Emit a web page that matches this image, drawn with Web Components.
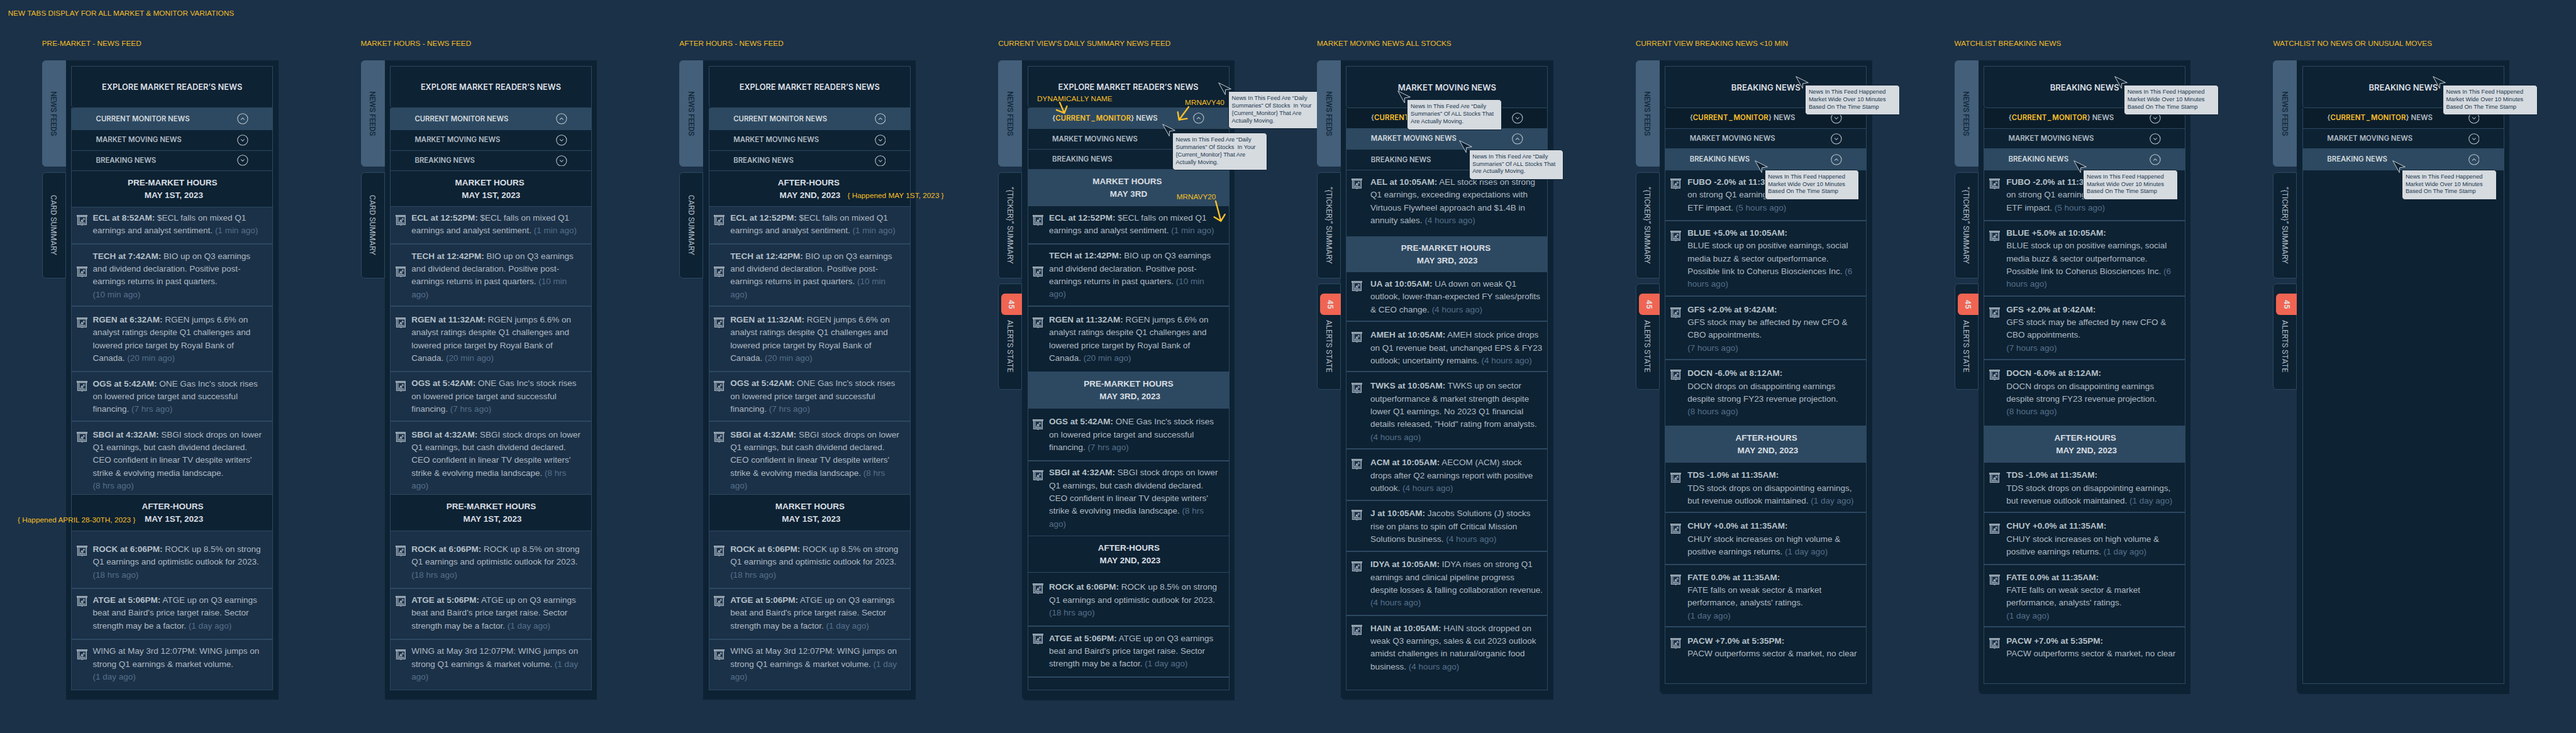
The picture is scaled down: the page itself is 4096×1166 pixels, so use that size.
<!DOCTYPE html>
<html lang="en">
<head>
<meta charset="utf-8">
<title>News feed tabs</title>
<style>
html,body{margin:0;padding:0;background:#1b3148;}
body{width:4096px;height:1166px;overflow:hidden;font-family:"Liberation Sans",Arial,sans-serif;}
</style>
</head>
<body>
<news-board></news-board>
<script>
const BORDER = '#2c4961';

class FeedIcon extends HTMLElement {
  constructor() {
    super();
    this.attachShadow({mode: 'open'}).innerHTML = `
      <style>:host{display:block;width:20px;height:20px}svg{display:block}</style>
      <svg width="20" height="20" viewBox="0 0 20 20" fill="none">
        <rect x="1.6" y="2.6" width="16.8" height="15.6" fill="#5d7183" stroke="#a9b6c1" stroke-width="1.2"/>
        <rect x="4.4" y="4.2" width="11.8" height="11" fill="#1b3047"/>
        <path d="M4.9 4.6V14.8H15.8" stroke="#a9b6c1" stroke-width="1.1"/>
        <path d="M6.6 13.2H8L9 9.6 10.2 8.9V13H11.6L12.6 6.6 14 6.3 14.4 8.6H15.6" stroke="#c3cdd5" stroke-width="1.1"/>
        <rect x=".6" y=".5" width="18.8" height="2" fill="#5d7183" stroke="#b9c4cd" stroke-width="1.1"/>
        <path d="M9 19.2H11.2" stroke="#a9b6c1" stroke-width="1.4"/>
      </svg>`;
  }
}
customElements.define('feed-icon', FeedIcon);

class NewsItem extends HTMLElement {
  constructor() {
    super();
    this.attachShadow({mode: 'open'}).innerHTML = `
      <style>
      :host{display:flex;box-sizing:border-box;overflow:hidden;border-bottom:2.4px solid ${BORDER};padding-left:9px;gap:var(--gap,10.5px);
        font-size:16px;line-height:24.06px;color:#afbac3;white-space:nowrap}
      :host([last]){border-bottom:0}
      :host([line]){border-bottom:1.2px solid ${BORDER}}
      feed-icon{flex:none;margin-top:var(--icon)}
      .t{margin-top:var(--text)}
      ::slotted(b){font-weight:700;color:#b5c0c8}
      ::slotted(i){font-style:normal;color:#56708a}
      </style><feed-icon></feed-icon><div class="t"><slot></slot></div>`;
  }
}
customElements.define('news-item', NewsItem);

class FeedSection extends HTMLElement {
  constructor() {
    super();
    this.attachShadow({mode: 'open'}).innerHTML = `
      <style>
      :host{display:flow-root;box-sizing:border-box;background:#0d2233;border-bottom:1.2px solid ${BORDER};
        font-weight:700;font-size:16px;line-height:24.1px;color:#d9dee3;text-align:center;white-space:nowrap}
      :host([hl]){background:#2d4961;border-color:#2d4961}
      .t{padding-top:var(--text);transform:translateX(var(--dx,0))}
      .d{padding-left:5px}
      </style><div class="t"><div><slot></slot></div><div class="d"><slot name="date"></slot></div></div>`;
  }
}
customElements.define('feed-section', FeedSection);

class AccordionRow extends HTMLElement {
  constructor() {
    super();
    const open = this.hasAttribute('open');
    this.attachShadow({mode: 'open'}).innerHTML = `
      <style>
      :host{display:flex;align-items:center;justify-content:space-between;box-sizing:border-box;padding:0 45.5px;
        border-bottom:1.2px solid ${BORDER};background:#0d2233;color:#b0bac3;
        font:600 13.45px/20px Inter,sans-serif;white-space:nowrap}
      :host([deep]){background:#0b1d2b}
      :host([open]){background:#2d4961;border-color:#2d4961;color:#d3d9de}
      ::slotted(em){font-style:normal;color:#fdc12a;letter-spacing:.2px}
      svg{display:block}
      </style><span><slot></slot></span>
      <svg width="21" height="21" viewBox="0 0 21 21" fill="none" stroke="#c3cbd2" stroke-width="1.2">
        <circle cx="10.5" cy="10.5" r="9.6"/><path d="${open ? 'M7.2 12.3 10.5 9 13.8 12.3' : 'M7.2 8.9 10.5 12.2 13.8 8.9'}"/></svg>`;
  }
}
customElements.define('accordion-row', AccordionRow);

class SideTab extends HTMLElement {
  constructor() {
    super();
    this.attachShadow({mode: 'open'}).innerHTML = `
      <style>
      :host{display:flex;flex-direction:column;align-items:center;justify-content:center;box-sizing:border-box;width:45px;height:200px;
        border:1.2px solid ${BORDER};border-radius:7px 0 0 7px;background:#0d2233;color:#b0bac3;
        font:400 14.8px/18px Roboto,sans-serif;white-space:nowrap}
      :host([active]){background:#435f79;border-color:#435f79;color:#132a3d;font-weight:500;letter-spacing:-.4px}
      :host([badge]){justify-content:flex-start}
      span{writing-mode:vertical-rl}
      .badge{display:flex;align-items:center;justify-content:center;width:39px;height:40px;margin:18px -1.2px 9px 0;align-self:flex-end;
        border-radius:7px 0 0 7px;background:#f06452;color:#dfe0e2;font-weight:700;letter-spacing:0}
      </style>${this.hasAttribute('badge') ? `<div class="badge"><span>${this.getAttribute('badge')}</span></div>` : ''}<span><slot></slot></span>`;
  }
}
customElements.define('side-tab', SideTab);

class HoverTip extends HTMLElement {
  constructor() {
    super();
    this.attachShadow({mode: 'open'}).innerHTML = `
      <style>
      :host{display:block;position:absolute}
      svg{position:absolute;left:-2px;top:-2px}
      div{margin:16px 0 0 17.5px;box-sizing:border-box;width:178.6px;padding:6px 0 6.4px 5.6px;background:#d6dbe0;border:1.2px solid #0d2233;
        border-radius:0 6px 0 6px;font:11px/14.05px "Liberation Sans",Arial,sans-serif;color:#22384e;white-space:pre}
      </style>
      <svg width="30" height="30" viewBox="-2 -2 30 30" fill="#0d2233" stroke="#d6dbe0" stroke-width="1.1" stroke-linejoin="miter">
        <path d="M0 0 23.3 11.6 12.8 13.2 12.5 22.3Z"/></svg>
      <div><slot></slot></div>`;
  }
}
customElements.define('hover-tip', HoverTip);

/* Free note over a panel; left edge and vertical middle come from the style. */
class CanvasNote extends HTMLElement {
  constructor() {
    super();
    this.attachShadow({mode: 'open'}).innerHTML = `
      <style>:host{display:block;position:absolute;margin-top:-10px;font-size:14px;line-height:20px;color:#f6bf26;white-space:nowrap}</style><slot></slot>`;
  }
}
customElements.define('canvas-note', CanvasNote);

class NoteArrow extends HTMLElement {
  constructor() {
    super();
    this.attachShadow({mode: 'open'}).innerHTML = `
      <style>:host{display:block;position:absolute}svg{display:block;overflow:visible}</style>
      <svg width="1" height="1" fill="none" stroke="#fdc12a" stroke-width="2.8" stroke-linecap="round" stroke-linejoin="round"><path d="${this.getAttribute('d')}"/></svg>`;
  }
}
customElements.define('note-arrow', NoteArrow);

class FeedColumn extends HTMLElement {
  set data(c) {
    const TOP = 124;
    let y = TOP;
    const take = to => { const h = to - y; y = to; return h.toFixed(2) + 'px'; };
    const head = take(c.rows[0]);
    const rows = c.labels.map((l, i) => `<accordion-row style="height:${take(c.rows[i + 1])}" ${i === c.open ? 'open' : ''} ${i === 0 ? 'deep' : ''}>${l}</accordion-row>`).join('');
    const feed = c.feed.map((f, i) => {
      const s = y, next = c.feed[i + 1];
      if (f.h) return `<feed-section ${f.hl ? 'hl' : ''} style="height:${take(f.to)};--text:${(f.t - 12 - s).toFixed(2)}px;--dx:${f.dx || 0}px">${f.h}<span slot="date">${f.d}</span></feed-section>`;
      if (!f.x) return `<div style="height:${take(f.to)}"></div>`;
      const plain = !next || next.h;
      return `<news-item ${next && next.h && !next.hl ? 'line' : plain ? 'last' : ''} style="height:${take(f.to + (plain ? 0 : 1.2))};--icon:${(f.i - s).toFixed(2)}px;--text:${(f.t - 12 - s).toFixed(2)}px">${f.x}</news-item>`;
    }).join('');
    this.attachShadow({mode: 'open'}).innerHTML = `
      <style>
      :host{display:block;position:relative;z-index:0;flex:0 0 600px}
      h2{margin:0;font:400 14px/20px "Liberation Sans",Arial,sans-serif;color:#f3bc27;padding:2px 0 22px;white-space:nowrap}
      u{text-decoration:none;padding:0 2px}
      .body{display:flex;align-items:flex-start}
      .tabs{display:flex;flex-direction:column;gap:10px}
      .panel{box-sizing:border-box;width:400px;height:${c.end[1] - 114}px;padding:10px;background:#0d2233;border-radius:0 0 0 ${c.round ? 8 : 0}px}
      .head{box-sizing:border-box;display:flex;align-items:center;justify-content:center;height:${head};border:1.2px solid ${BORDER};
        border-radius:0 0 0 6px;font:600 ${c.size || 15.45}px/20px Inter,sans-serif;color:#dbdfe4;padding-top:2px;white-space:nowrap}
      .list{box-sizing:border-box;height:${c.end[0] - c.rows[0]}px;border:solid ${BORDER};border-width:0 1.2px 1.2px;background:${c.bg};--gap:${c.gap || 10.5}px}
      </style>
      <h2>${c.title}</h2>
      <div class="body">
        <div class="tabs">${c.tabs}</div>
        <div class="panel"><div class="head">${c.head}</div><div class="list">${rows}${feed}</div></div>
      </div>${c.over || ''}`;
  }
}
customElements.define('feed-column', FeedColumn);

const news = '<side-tab active>NEWS FEEDS</side-tab>';
const tabsA = news + '<side-tab>CARD SUMMARY</side-tab>';
const tabsB = news + '<side-tab>“{TICKER}” SUMMARY</side-tab><side-tab badge="45">ALERTS STATE</side-tab>';
const labelsA = ['CURRENT MONITOR NEWS', 'MARKET MOVING NEWS', 'BREAKING NEWS'];
const labelsB = ['{<em>CURRENT<u>_</u>MONITOR</em>} NEWS', 'MARKET MOVING NEWS', 'BREAKING NEWS'];
const EXPLORE = 'EXPLORE MARKET READER’S NEWS';

const early = (v, first, second) => {
  const hr = (a, b) => v === 0 ? a : b;
  return [
    first,
    {i: 405, t: 410.9, to: 459.7, x: `<b>ECL at ${hr('8:52AM', '12:52PM')}:</b> $ECL falls on mixed Q1<br>earnings and analyst sentiment. <i>(1 min ago)</i>`},
    {i: 502.2, t: 482.8, to: 576.7, x: `<b>TECH at ${hr('7:42AM', '12:42PM')}:</b> BIO up on Q3 earnings<br>and dividend declaration. Positive post-<br>earnings returns in past quarters.${hr('<br><i>(10 min ago)</i>', ' <i>(10 min<br>ago)</i>')}`},
    {i: 598.5, t: 602.9, to: 699.6, x: `<b>RGEN at ${hr('6:32AM', '11:32AM')}:</b> RGEN jumps 6.6% on<br>analyst ratings despite Q1 challenges and<br>lowered price target by Royal Bank of<br>Canada. <i>(20 min ago)</i>`},
    {i: 718, t: 723, to: 792.9, x: `<b>OGS at 5:42AM:</b> ONE Gas Inc's stock rises<br>on lowered price target and successful<br>financing. <i>(7 hrs ago)</i>`},
    {i: 814, t: 819, to: 932, x: `<b>SBGI at 4:32AM:</b> SBGI stock drops on lower<br>Q1 earnings, but cash dividend declared.<br>CEO confident in linear TV despite writers'<br>strike &amp; evolving media landscape.${hr('<br><i>(8 hrs ago)</i>', ' <i>(8 hrs<br>ago)</i>')}`},
    second,
    {i: 1028.2, t: 1035, to: 1108.6, x: `<b>ROCK at 6:06PM:</b> ROCK up 8.5% on strong<br>Q1 earnings and optimistic outlook for 2023.<br><i>(18 hrs ago)</i>`},
    {i: 1123, t: 1131, to: 1204.1, x: `<b>ATGE at 5:06PM:</b> ATGE up on Q3 earnings<br>beat and Baird's price target raise. Sector<br>strength may be a factor. <i>(1 day ago)</i>`},
    {i: 1222.9, t: 1227, to: 1297, x: `WING at May 3rd 12:07PM: WING jumps on<br>strong Q1 earnings &amp; market volume.${hr('<br><i>(1 day ago)</i>', ' <i>(1 day<br>ago)</i>')}`},
  ];
};
const A = {tabs: tabsA, labels: labelsA, open: 0, head: EXPLORE, size: 15.1, bg: '#1b3148', end: [1299.4, 1318]};
const rowsA = [203.8, 245, 284, 322.3];

const daily4 = [
  {h: 'MARKET HOURS', d: 'MAY 3RD', hl: 1, t: 342.2, to: 388.1, dx: -2},
  {i: 405, t: 410.7, to: 460, x: `<b>ECL at 12:52PM:</b> $ECL falls on mixed Q1<br>earnings and analyst sentiment. <i>(1 min ago)</i>`},
  {i: 502.3, t: 482.6, to: 576.9, x: `<b>TECH at 12:42PM:</b> BIO up on Q3 earnings<br>and dividend declaration. Positive post-<br>earnings returns in past quarters. <i>(10 min<br>ago)</i>`},
  {i: 598.4, t: 602.9, to: 700.2, x: `<b>RGEN at 11:32AM:</b> RGEN jumps 6.6% on<br>analyst ratings despite Q1 challenges and<br>lowered price target by Royal Bank of<br>Canada. <i>(20 min ago)</i>`},
  {h: 'PRE-MARKET HOURS', d: 'MAY 3RD, 2023', hl: 1, t: 723.4, to: 769.8, dx: .5},
  {i: 789.8, t: 794.9, to: 868.2, x: `<b>OGS at 5:42AM:</b> ONE Gas Inc's stock rises<br>on lowered price target and successful<br>financing. <i>(7 hrs ago)</i>`},
  {i: 886, t: 890.8, to: 1010, x: `<b>SBGI at 4:32AM:</b> SBGI stock drops on lower<br>Q1 earnings, but cash dividend declared.<br>CEO confident in linear TV despite writers'<br>strike &amp; evolving media landscape. <i>(8 hrs<br>ago)</i>`},
  {h: 'AFTER-HOURS', d: 'MAY 2ND, 2023', t: 1032.7, to: 1079, dx: .8},
  {i: 1099.2, t: 1106.6, to: 1179.2, x: `<b>ROCK at 6:06PM:</b> ROCK up 8.5% on strong<br>Q1 earnings and optimistic outlook for 2023.<br><i>(18 hrs ago)</i>`},
  {i: 1193.9, t: 1202.6, to: 1274.7, x: `<b>ATGE at 5:06PM:</b> ATGE up on Q3 earnings<br>beat and Baird's price target raise. Sector<br>strength may be a factor. <i>(1 day ago)</i>`},
  {to: 1297},
];
const at = '<i>(4 hours ago)</i>';
const daily5 = [
  {i: 335.9, t: 343.6, to: 444.8, x: `<b>AEL at 10:05AM:</b> AEL stock rises on strong<br>Q1 earnings, exceeding expectations with<br>Virtuous Flywheel approach and $1.4B in<br>annuity sales. ${at}`},
  {h: 'PRE-MARKET HOURS', d: 'MAY 3RD, 2023', hl: 1, t: 467.4, to: 513.2, dx: -2.3},
  {i: 529, t: 535.5, to: 605.1, x: `<b>UA at 10:05AM:</b> UA down on weak Q1<br>outlook, lower-than-expected FY sales/profits<br>&amp; CEO change. ${at}`},
  {i: 625.2, t: 631.6, to: 700.3, x: `<b>AMEH at 10:05AM:</b> AMEH stock price drops<br>on Q1 revenue beat, unchanged EPS &amp; FY23<br>outlook; uncertainty remains. ${at}`},
  {i: 721.2, t: 727.6, to: 844.9, x: `<b>TWKS at 10:05AM:</b> TWKS up on sector<br>outperformance &amp; market strength despite<br>lower Q1 earnings. No 2023 Q1 financial<br>details released, "Hold" rating from analysts.<br>${at}`},
  {i: 864.9, t: 872, to: 942.9, x: `<b>ACM at 10:05AM:</b> AECOM (ACM) stock<br>drops after Q2 earnings report with positive<br>outlook. ${at}`},
  {i: 960.8, t: 968, to: 1038.4, x: `<b>J at 10:05AM:</b> Jacobs Solutions (J) stocks<br>rise on plans to spin off Critical Mission<br>Solutions business. ${at}`},
  {i: 1057, t: 1063.9, to: 1158.8, x: `<b>IDYA at 10:05AM:</b> IDYA rises on strong Q1<br>earnings and clinical pipeline progress<br>despite losses &amp; falling collaboration revenue.<br>${at}`},
  {i: 1177, t: 1183.9, to: 1297, x: `<b>HAIN at 10:05AM:</b> HAIN stock dropped on<br>weak Q3 earnings, sales &amp; cut 2023 outlook<br>amidst challenges in natural/organic food<br>business. ${at}`},
];
const breaking = [
  {i: 336.8, t: 343.6, to: 415.9, x: `<b>FUBO -2.0% at 11:35AM:</b><br>on strong Q1 earnings,<br>ETF impact. <i>(5 hours ago)</i>`},
  {i: 435, t: 439.6, to: 557.4, x: `<b>BLUE +5.0% at 10:05AM:</b><br>BLUE stock up on positive earnings, social<br>media buzz &amp; sector outperformance.<br>Possible link to Coherus Biosciences Inc. <i>(6<br>hours ago)</i>`},
  {i: 579, t: 583.5, to: 677, x: `<b>GFS +2.0% at 9:42AM:</b><br>GFS stock may be affected by new CFO &amp;<br>CBO appointments.<br><i>(7 hours ago)</i>`},
  {i: 696.2, t: 703.8, to: 802, x: `<b>DOCN -6.0% at 8:12AM:</b><br>DOCN drops on disappointing earnings<br>despite strong FY23 revenue projection.<br><i>(8 hours ago)</i>`},
  {h: 'AFTER-HOURS', d: 'MAY 2ND, 2023', hl: 1, t: 825.4, to: 871.8, dx: 1.2},
  {i: 889.8, t: 895.7, to: 964.7, x: `<b>TDS -1.0% at 11:35AM:</b><br>TDS stock drops on disappointing earnings,<br>but revenue outlook maintained. <i>(1 day ago)</i>`},
  {i: 985.7, t: 991.6, to: 1062.9, x: `<b>CHUY +0.0% at 11:35AM:</b><br>CHUY stock increases on high volume &amp;<br>positive earnings returns. <i>(1 day ago)</i>`},
  {i: 1082, t: 1087.9, to: 1180.9, x: `<b>FATE 0.0% at 11:35AM:</b><br>FATE falls on weak sector &amp; market<br>performance, analysts' ratings.<br><i>(1 day ago)</i>`},
  {i: 1202, t: 1207.5, to: 1285, x: `<b>PACW +7.0% at 5:35PM:</b><br>PACW outperforms sector &amp; market, no clear`},
];
/* Overlay coordinates are relative to the column, whose box starts at y 70. */
const tip = (x, y, text) => `<hover-tip style="left:${x}px;top:${(y - 70).toFixed(1)}px">${text}</hover-tip>`;
const note = (x, y, text) => `<canvas-note style="left:${x}px;top:${(y - 70).toFixed(1)}px">${text}</canvas-note>`;
const arrow = (x, y, d) => `<note-arrow style="left:${x}px;top:${y - 70}px" d="${d}"></note-arrow>`;
const mine = 'News In This Feed Are “Daily\nSummaries” Of Stocks  In Your\n{Current_Monitor} That Are\nActually Moving.';
const all = 'News In This Feed Are “Daily\nSummaries” Of ALL Stocks That\nAre Actually Moving.';
const wide = 'News In This Feed Happened\nMarket Wide Over 10 Minutes\nBased On The Time Stamp';
const B = {tabs: tabsB, labels: labelsB, bg: '#0d2233', round: 1};
const brk = {...B, open: 2, head: 'BREAKING NEWS', rows: [203.3, 242.8, 281.2, 321], end: [1287.6, 1306.5], gap: 12.6,
  over: tip(301.4, 143.5, wide) + tip(224.9, 303.3, wide)};

const columns = [
  {...A, title: 'PRE-MARKET - NEWS FEED', rows: [203.8, 245, 284, 321.8], over: note(-45.8, 979.5, '{ Happened APRIL 28-30TH, 2023 }'),
    feed: early(0, {h: 'PRE-MARKET HOURS', d: 'MAY 1ST, 2023', t: 344.4, to: 391, dx: .7}, {h: 'AFTER-HOURS', d: 'MAY 1ST, 2023', t: 954.6, to: 1001, dx: 1})},
  {...A, title: 'MARKET HOURS - NEWS FEED', rows: rowsA,
    feed: early(1, {h: 'MARKET HOURS', d: 'MAY 1ST, 2023', t: 344.4, to: 390, dx: -2.2}, {h: 'PRE-MARKET HOURS', d: 'MAY 1ST, 2023', t: 954.6, to: 1001, dx: .6})},
  {...A, title: 'AFTER HOURS - NEWS FEED', rows: rowsA, over: note(316.2, 368.3, '{ Happened MAY 1ST, 2023 }'),
    feed: early(2, {h: 'AFTER-HOURS', d: 'MAY 2ND, 2023', t: 344.4, to: 390, dx: -1.8}, {h: 'MARKET HOURS', d: 'MAY 1ST, 2023', t: 954.6, to: 1001, dx: .6})},
  {...B, title: "CURRENT VIEW'S DAILY SUMMARY NEWS FEED", head: EXPLORE, size: 15.1, open: 0, rows: [203.3, 243, 281.9, 319.8], end: [1299.5, 1318.8], feed: daily4,
    over: note(73.3, 186.3, 'DYNAMICALLY NAME') + note(351.5, 193.3, 'MRNAVY40') + note(335.6, 370.5, 'MRNAVY20')
      + arrow(115.8, 193.5, 'M0 0 8.7 20M-6 14 8.7 20 13.6 7')
      + arrow(359, 201.5, 'M0 0 -18 24.5M-20.4 9.8 -18 24.5 -3 22')
      + arrow(410, 378.3, 'M0 0 9.9 37.5M-2.8 30 9.9 37.5 17.4 25')
      + tip(415.4, 155.6, mine) + tip(310, 233.8, mine)},
  {...B, title: 'MARKET MOVING NEWS ALL STOCKS', head: 'MARKET MOVING NEWS', open: 1, rows: [203.3, 242.4, 281.9, 320.9], end: [1299.6, 1317.6], feed: daily5, gap: 15.6,
    over: tip(152.2, 171.6, all) + tip(268.5, 265.4, all)},
  {...brk, title: 'CURRENT VIEW BREAKING NEWS &lt;10 MIN', feed: breaking},
  {...brk, title: 'WATCHLIST BREAKING NEWS', feed: breaking},
  {...brk, title: 'WATCHLIST NO NEWS OR UNUSUAL MOVES', feed: []},
];

class NewsBoard extends HTMLElement {
  connectedCallback() {
    const root = this.attachShadow({mode: 'open'});
    root.innerHTML = `
      <style>
      :host{display:block;zoom:.84471;width:4849px;height:1380px;overflow:hidden;background:#1b3148}
      h1{margin:0;padding:15px 0 35px 15px;font:400 14px/20px "Liberation Sans",Arial,sans-serif;color:#f3bc27}
      .cols{display:flex;padding-left:79px}
      </style>
      <h1>NEW TABS DISPLAY FOR ALL MARKET &amp; MONITOR VARIATIONS</h1>
      <div class="cols"></div>`;
    const cols = root.querySelector('.cols');
    for (const c of columns) {
      const el = document.createElement('feed-column');
      el.data = c;
      cols.append(el);
    }
  }
}
customElements.define('news-board', NewsBoard);
</script>
</body>
</html>
